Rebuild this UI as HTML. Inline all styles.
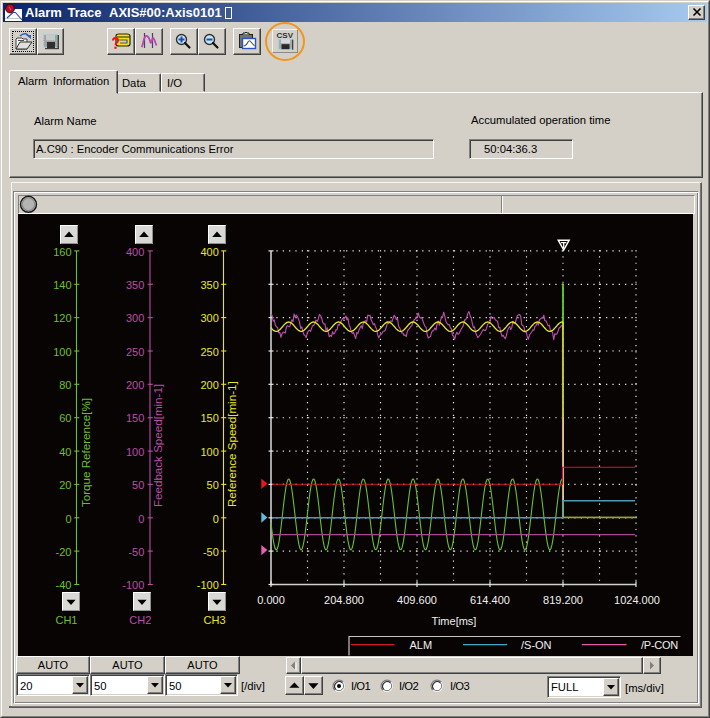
<!DOCTYPE html>
<html><head><meta charset="utf-8">
<style>
*{box-sizing:border-box;margin:0;padding:0}
html,body{width:710px;height:718px;overflow:hidden;background:#d4d0c8;font-family:"Liberation Sans",sans-serif;font-size:11px;color:#000}
.a{position:absolute}
#win{left:0;top:0;width:710px;height:718px;background:#d4d0c8;border:1px solid;border-color:#d4d0c8 #404040 #404040 #d4d0c8}
#win2{left:1px;top:1px;width:708px;height:716px;border:1px solid;border-color:#fff #808080 #808080 #fff}
#title{left:3px;top:3px;width:704px;height:19px;background:linear-gradient(90deg,#0a246a 0%,#a6caf0 100%)}
.tt{top:5px;color:#fff;font-weight:bold;font-size:13px;line-height:15px;white-space:nowrap}
.btn{background:#d4d0c8;border:1px solid;border-color:#fff #404040 #404040 #fff;box-shadow:inset -1px -1px 0 #808080,inset 1px 1px 0 #d4d0c8}
.sunk{border:1px solid;border-color:#808080 #fff #fff #808080}
.raised{border:1px solid;border-color:#fff #808080 #808080 #fff}
.etch{border:1px solid;border-color:#808080 #fff #fff #808080;box-shadow:inset 1px 1px 0 #fff, 1px 1px 0 #808080}
.t{white-space:nowrap;line-height:13px}
</style></head><body>
<div id="win" class="a"></div><div id="win2" class="a"></div>
<div id="title" class="a"></div>
<div class="a tt" style="left:25px">Alarm</div><div class="a tt" style="left:67.5px">Trace</div><div class="a tt" style="left:109px">AXIS#00:Axis0101</div>
<div class="a" style="left:225px;top:7px;width:7px;height:12px;border:1.5px solid #fff"></div>
<svg class="a" style="left:4px;top:3px" width="20" height="19" viewBox="0 0 20 19">
 <rect x="1" y="6" width="17" height="12" fill="#fff"/>
 <path d="M1 15.5 H18" stroke="#c8c8c8" stroke-width="1"/>
 <path d="M3 15 L9 9.5 L11.5 9.5 L18 17" stroke="#2a4aa8" stroke-width="1.1" fill="none"/>
 <circle cx="6" cy="5.5" r="4.4" fill="#b01020" stroke="#400008" stroke-width="1"/>
 <path d="M5 4 L7 7" stroke="#e838a8" stroke-width="1.3"/>
</svg>
<!-- close button -->
<div class="a btn" style="left:688px;top:5px;width:17px;height:15px"></div>
<svg class="a" style="left:688.5px;top:5px" width="16" height="14" viewBox="0 0 16 14"><path d="M4.5 3.5 L11.5 10.5 M11.5 3.5 L4.5 10.5" stroke="#000" stroke-width="1.6"/></svg>


<!-- toolbar buttons -->
<div class="a btn" style="left:9px;top:28px;width:28px;height:27px"></div>
<div class="a" style="left:12px;top:31px;width:22px;height:21px;border:1px dotted #000"></div>
<svg class="a" style="left:14px;top:32px" width="20" height="20" viewBox="0 0 20 20">
 <path d="M6 4 Q10 0 14 3" stroke="#2a5fc0" stroke-width="1.6" fill="none"/><path d="M12 3 L17 3 L17 7 Z" fill="#2a5fc0"/>
 <path d="M2 7 L2 17 L13 17 L13 7 L9 7 L8 6 L3 6 Z" fill="#f4f4f4" stroke="#404040" stroke-width="1"/>
 <path d="M2 17 L6 10 L18 10 L13 17 Z" fill="#e0e0e0" stroke="#303030" stroke-width="1"/>
 <path d="M4 8.5 H10" stroke="#505050" stroke-width="1"/>
</svg>
<div class="a btn" style="left:37px;top:28px;width:27px;height:27px"></div>
<svg class="a" style="left:42px;top:33px" width="18" height="17" viewBox="0 0 18 17">
 <rect x="1.5" y="1.5" width="14" height="13" fill="#a0a0a0" stroke="#9adcf0" stroke-width="1.4" stroke-dasharray="1.2 1"/>
 <rect x="4" y="1.5" width="9" height="6" fill="#c8c8c8"/>
 <rect x="5" y="9" width="8" height="6" fill="#303030"/>
 <rect x="15.5" y="2" width="1.5" height="13" fill="#404040"/>
 <rect x="3" y="15" width="14" height="1.2" fill="#404040"/>
</svg>
<div class="a btn" style="left:107px;top:28px;width:28px;height:27px"></div>
<svg class="a" style="left:111px;top:32px" width="22" height="20" viewBox="0 0 22 20">
 <path d="M5 4 Q5 2 8 2 L16 2 Q19 2 19 4 L19 12 Q19 14 16 14 L8 14 Q5 14 5 12 Z" fill="#f4e020" stroke="#282800" stroke-width="1.2"/>
 <path d="M6 5 H19" stroke="#282800" stroke-width="1"/>
 <path d="M8 8 L16 8 L16 11 L9 11" stroke="#3a50b0" stroke-width="1.2" fill="none"/>
 <path d="M2 8.5 Q2 6 4.5 6 Q7 6 7 8.5 Q7 10 5.5 11 Q4.5 11.8 4.5 13" stroke="#e8141e" stroke-width="2" fill="none"/>
 <rect x="3.4" y="14.6" width="2.2" height="2.2" fill="#e8141e"/>
</svg>
<div class="a btn" style="left:135px;top:28px;width:28px;height:27px"></div>
<svg class="a" style="left:139px;top:32px" width="20" height="20" viewBox="0 0 20 20">
 <path d="M5.5 1 V16 M13.5 1 V16" stroke="#40407c" stroke-width="1.2"/>
 <path d="M2.5 15 Q3.5 14 4.5 9 Q6 3 8 4 Q10 5 11 9 Q12 13 13 8 Q14 4.5 15.5 8 Q16.5 11 17.5 13.5" stroke="#b848b0" stroke-width="1.8" fill="none"/>
</svg>
<div class="a btn" style="left:170px;top:28px;width:28px;height:27px"></div>
<svg class="a" style="left:174px;top:32px" width="20" height="20" viewBox="0 0 20 20">
 <circle cx="7.5" cy="7.5" r="5" fill="#c0e8f8" stroke="#303030" stroke-width="1.4"/>
 <path d="M7.5 4.5 V10.5 M4.5 7.5 H10.5" stroke="#2848b0" stroke-width="2"/>
 <path d="M11 11 L15.5 15.5" stroke="#101010" stroke-width="2.2" stroke-linecap="round"/>
</svg>
<div class="a btn" style="left:198px;top:28px;width:28px;height:27px"></div>
<svg class="a" style="left:202px;top:32px" width="20" height="20" viewBox="0 0 20 20">
 <circle cx="7.5" cy="7.5" r="5" fill="#c0e8f8" stroke="#303030" stroke-width="1.4"/>
 <path d="M4.5 7.5 H10.5" stroke="#2848b0" stroke-width="2"/>
 <path d="M11 11 L15.5 15.5" stroke="#101010" stroke-width="2.2" stroke-linecap="round"/>
</svg>
<div class="a btn" style="left:233px;top:28px;width:28px;height:27px"></div>
<svg class="a" style="left:237px;top:31px" width="21" height="20" viewBox="0 0 21 20">
 <rect x="2.5" y="3.5" width="13" height="13" fill="#707070" stroke="#202020" stroke-width="1"/>
 <path d="M6 3.5 V2 H8 Q9 0 10 2 H12 V3.5" fill="#d0d0d0" stroke="#202020" stroke-width="1"/>
 <rect x="5.5" y="7.5" width="13" height="10" fill="#fff" stroke="#2a56b8" stroke-width="1.4"/>
 <path d="M6.5 15 Q9 15 11 11 Q12.5 8.5 14 11 L17.5 15" stroke="#505050" stroke-width="1.1" fill="none"/>
</svg>
<div class="a" style="left:272px;top:29px;width:26px;height:24px;background:#d4d0c8;border:1px solid;border-color:#f4f2ee #8c8a84 #8c8a84 #f4f2ee"></div>
<svg class="a" style="left:276px;top:31px" width="19" height="21" viewBox="0 0 19 21">
 <text x="0.5" y="6.8" font-family="Liberation Sans" font-size="7" font-weight="bold" fill="#303030" textLength="16.5" lengthAdjust="spacingAndGlyphs">CSV</text>
 <rect x="2.5" y="8.2" width="14" height="10" fill="#a8a8a8" stroke="#9adcf0" stroke-width="1.4" stroke-dasharray="1.2 1"/>
 <rect x="5" y="8.2" width="9" height="4" fill="#d8d8d8"/>
 <rect x="5.5" y="13.2" width="8" height="5" fill="#282828"/>
 <rect x="16" y="8.7" width="1.3" height="10" fill="#404040"/>
</svg>
<div class="a" style="left:265px;top:22px;width:40px;height:39px;border:2px solid #f0961e;border-radius:50%"></div>
<!--TOOLBAR-->

<!-- tab panel -->
<div class="a" style="left:9px;top:92px;width:694px;height:86px;border:1px solid;border-color:#fff #404040 #404040 #fff;box-shadow:inset -1px -1px 0 #808080"></div>
<!-- tabs -->
<div class="a" style="left:117px;top:73px;width:44px;height:19px;border:1px solid;border-color:#fff #404040 transparent #fff;border-radius:2px 2px 0 0;box-shadow:inset -1px 0 0 #808080"></div>
<div class="a" style="left:161px;top:73px;width:44px;height:19px;border:1px solid;border-color:#fff #404040 transparent #fff;border-radius:2px 2px 0 0;box-shadow:inset -1px 0 0 #808080"></div>
<div class="a" style="left:9px;top:70px;width:109px;height:24px;background:#d4d0c8;border:1px solid;border-color:#fff #404040 #d4d0c8 #fff;border-radius:2px 2px 0 0;box-shadow:inset -1px 0 0 #808080"></div>
<div class="a" style="left:10px;top:92px;width:106px;height:2px;background:#d4d0c8"></div>
<div class="a t" style="left:18px;top:75px;font-size:11.25px;word-spacing:2.5px">Alarm Information</div>
<div class="a t" style="left:122px;top:77px;font-size:11.25px">Data</div>
<div class="a t" style="left:167px;top:77px;font-size:11.25px">I/O</div>
<div class="a t" style="left:34px;top:115px;font-size:11.25px">Alarm Name</div>
<div class="a" style="left:33px;top:139px;width:401px;height:20px;border:1px solid;border-color:#808080 #fff #fff #808080;box-shadow:inset 1px 1px 0 #404040"></div>
<div class="a t" style="left:36px;top:143px;font-size:11.25px">A.C90 : Encoder Communications Error</div>
<div class="a t" style="left:471px;top:114px;font-size:11.25px">Accumulated operation time</div>
<div class="a" style="left:469px;top:139px;width:104px;height:20px;border:1px solid;border-color:#808080 #fff #fff #808080;box-shadow:inset 1px 1px 0 #404040"></div>
<div class="a t" style="left:484px;top:143px;font-size:11.25px">50:04:36.3</div>
<!--TABS-->

<!-- lower group raised -->
<div class="a" style="left:11px;top:182px;width:691px;height:526px;border:1px solid;border-color:#f6f6f2 #585858 #585858 #f6f6f2;box-shadow:inset -1px -1px 0 #787878"></div>
<!-- etched inner frame -->
<div class="a" style="left:13px;top:191px;width:686px;height:513px;border:1px solid;border-color:#808080 #fff #fff #808080;box-shadow:inset 1px 1px 0 #fff,inset -1px -1px 0 #808080"></div>
<!-- status strip -->
<div class="a" style="left:18px;top:195px;width:677px;height:19px;border:1px solid;border-color:#808080 #fff #fff #808080"></div>
<div class="a" style="left:501px;top:196px;width:2px;height:17px;border-left:1px solid #808080;border-right:1px solid #fff"></div>
<svg class="a" style="left:19px;top:195px" width="19" height="19" viewBox="0 0 19 19"><circle cx="9.5" cy="9.3" r="8" fill="#b4b4b4" stroke="#181818" stroke-width="1.4"/><circle cx="9.5" cy="9.3" r="6.3" fill="none" stroke="#8c8c8c" stroke-width="1.2"/></svg>
<!-- black chart -->
<div class="a" id="chart" style="left:18px;top:214px;width:675px;height:442px;background:#080404"></div>
<div class="a" style="left:9px;top:706px;width:3px;height:2px;background:#606060"></div><!--CHARTFRAME-->
<!--CHART_BEGIN--><svg class="a" style="left:0;top:0" width="710" height="718" viewBox="0 0 710 718" font-family="Liberation Sans, sans-serif" font-size="11">
<g stroke="#f0f0f0" stroke-width="1.15" stroke-dasharray="1.2 5.14" fill="none">
<path d="M276.4 250.9 H637.0"/>
<path d="M276.4 284.3 H637.0"/>
<path d="M276.4 317.6 H637.0"/>
<path d="M276.4 351.0 H637.0"/>
<path d="M276.4 384.3 H637.0"/>
<path d="M276.4 417.7 H637.0"/>
<path d="M276.4 451.1 H637.0"/>
<path d="M276.4 484.4 H637.0"/>
<path d="M276.4 517.8 H637.0"/>
<path d="M276.4 551.1 H637.0"/>
<path d="M307.5 256.3 V582.5"/>
<path d="M344.0 256.3 V582.5"/>
<path d="M380.5 256.3 V582.5"/>
<path d="M417.0 256.3 V582.5"/>
<path d="M453.5 256.3 V582.5"/>
<path d="M490.0 256.3 V582.5"/>
<path d="M526.5 256.3 V582.5"/>
<path d="M563.0 256.3 V582.5"/>
<path d="M599.5 256.3 V582.5"/>
<path d="M636.0 256.3 V582.5"/>
<rect x="306.9" y="250.2" width="1.2" height="1.2" fill="#f0f0f0" stroke="none"/>
<rect x="343.4" y="250.2" width="1.2" height="1.2" fill="#f0f0f0" stroke="none"/>
<rect x="379.9" y="250.2" width="1.2" height="1.2" fill="#f0f0f0" stroke="none"/>
<rect x="416.4" y="250.2" width="1.2" height="1.2" fill="#f0f0f0" stroke="none"/>
<rect x="452.9" y="250.2" width="1.2" height="1.2" fill="#f0f0f0" stroke="none"/>
<rect x="489.4" y="250.2" width="1.2" height="1.2" fill="#f0f0f0" stroke="none"/>
<rect x="525.9" y="250.2" width="1.2" height="1.2" fill="#f0f0f0" stroke="none"/>
<rect x="562.4" y="250.2" width="1.2" height="1.2" fill="#f0f0f0" stroke="none"/>
<rect x="598.9" y="250.2" width="1.2" height="1.2" fill="#f0f0f0" stroke="none"/>
<rect x="635.4" y="250.2" width="1.2" height="1.2" fill="#f0f0f0" stroke="none"/>
<rect x="306.9" y="283.6" width="1.2" height="1.2" fill="#f0f0f0" stroke="none"/>
<rect x="343.4" y="283.6" width="1.2" height="1.2" fill="#f0f0f0" stroke="none"/>
<rect x="379.9" y="283.6" width="1.2" height="1.2" fill="#f0f0f0" stroke="none"/>
<rect x="416.4" y="283.6" width="1.2" height="1.2" fill="#f0f0f0" stroke="none"/>
<rect x="452.9" y="283.6" width="1.2" height="1.2" fill="#f0f0f0" stroke="none"/>
<rect x="489.4" y="283.6" width="1.2" height="1.2" fill="#f0f0f0" stroke="none"/>
<rect x="525.9" y="283.6" width="1.2" height="1.2" fill="#f0f0f0" stroke="none"/>
<rect x="562.4" y="283.6" width="1.2" height="1.2" fill="#f0f0f0" stroke="none"/>
<rect x="598.9" y="283.6" width="1.2" height="1.2" fill="#f0f0f0" stroke="none"/>
<rect x="635.4" y="283.6" width="1.2" height="1.2" fill="#f0f0f0" stroke="none"/>
<rect x="306.9" y="317.0" width="1.2" height="1.2" fill="#f0f0f0" stroke="none"/>
<rect x="343.4" y="317.0" width="1.2" height="1.2" fill="#f0f0f0" stroke="none"/>
<rect x="379.9" y="317.0" width="1.2" height="1.2" fill="#f0f0f0" stroke="none"/>
<rect x="416.4" y="317.0" width="1.2" height="1.2" fill="#f0f0f0" stroke="none"/>
<rect x="452.9" y="317.0" width="1.2" height="1.2" fill="#f0f0f0" stroke="none"/>
<rect x="489.4" y="317.0" width="1.2" height="1.2" fill="#f0f0f0" stroke="none"/>
<rect x="525.9" y="317.0" width="1.2" height="1.2" fill="#f0f0f0" stroke="none"/>
<rect x="562.4" y="317.0" width="1.2" height="1.2" fill="#f0f0f0" stroke="none"/>
<rect x="598.9" y="317.0" width="1.2" height="1.2" fill="#f0f0f0" stroke="none"/>
<rect x="635.4" y="317.0" width="1.2" height="1.2" fill="#f0f0f0" stroke="none"/>
<rect x="306.9" y="350.3" width="1.2" height="1.2" fill="#f0f0f0" stroke="none"/>
<rect x="343.4" y="350.3" width="1.2" height="1.2" fill="#f0f0f0" stroke="none"/>
<rect x="379.9" y="350.3" width="1.2" height="1.2" fill="#f0f0f0" stroke="none"/>
<rect x="416.4" y="350.3" width="1.2" height="1.2" fill="#f0f0f0" stroke="none"/>
<rect x="452.9" y="350.3" width="1.2" height="1.2" fill="#f0f0f0" stroke="none"/>
<rect x="489.4" y="350.3" width="1.2" height="1.2" fill="#f0f0f0" stroke="none"/>
<rect x="525.9" y="350.3" width="1.2" height="1.2" fill="#f0f0f0" stroke="none"/>
<rect x="562.4" y="350.3" width="1.2" height="1.2" fill="#f0f0f0" stroke="none"/>
<rect x="598.9" y="350.3" width="1.2" height="1.2" fill="#f0f0f0" stroke="none"/>
<rect x="635.4" y="350.3" width="1.2" height="1.2" fill="#f0f0f0" stroke="none"/>
<rect x="306.9" y="383.7" width="1.2" height="1.2" fill="#f0f0f0" stroke="none"/>
<rect x="343.4" y="383.7" width="1.2" height="1.2" fill="#f0f0f0" stroke="none"/>
<rect x="379.9" y="383.7" width="1.2" height="1.2" fill="#f0f0f0" stroke="none"/>
<rect x="416.4" y="383.7" width="1.2" height="1.2" fill="#f0f0f0" stroke="none"/>
<rect x="452.9" y="383.7" width="1.2" height="1.2" fill="#f0f0f0" stroke="none"/>
<rect x="489.4" y="383.7" width="1.2" height="1.2" fill="#f0f0f0" stroke="none"/>
<rect x="525.9" y="383.7" width="1.2" height="1.2" fill="#f0f0f0" stroke="none"/>
<rect x="562.4" y="383.7" width="1.2" height="1.2" fill="#f0f0f0" stroke="none"/>
<rect x="598.9" y="383.7" width="1.2" height="1.2" fill="#f0f0f0" stroke="none"/>
<rect x="635.4" y="383.7" width="1.2" height="1.2" fill="#f0f0f0" stroke="none"/>
<rect x="306.9" y="417.1" width="1.2" height="1.2" fill="#f0f0f0" stroke="none"/>
<rect x="343.4" y="417.1" width="1.2" height="1.2" fill="#f0f0f0" stroke="none"/>
<rect x="379.9" y="417.1" width="1.2" height="1.2" fill="#f0f0f0" stroke="none"/>
<rect x="416.4" y="417.1" width="1.2" height="1.2" fill="#f0f0f0" stroke="none"/>
<rect x="452.9" y="417.1" width="1.2" height="1.2" fill="#f0f0f0" stroke="none"/>
<rect x="489.4" y="417.1" width="1.2" height="1.2" fill="#f0f0f0" stroke="none"/>
<rect x="525.9" y="417.1" width="1.2" height="1.2" fill="#f0f0f0" stroke="none"/>
<rect x="562.4" y="417.1" width="1.2" height="1.2" fill="#f0f0f0" stroke="none"/>
<rect x="598.9" y="417.1" width="1.2" height="1.2" fill="#f0f0f0" stroke="none"/>
<rect x="635.4" y="417.1" width="1.2" height="1.2" fill="#f0f0f0" stroke="none"/>
<rect x="306.9" y="450.4" width="1.2" height="1.2" fill="#f0f0f0" stroke="none"/>
<rect x="343.4" y="450.4" width="1.2" height="1.2" fill="#f0f0f0" stroke="none"/>
<rect x="379.9" y="450.4" width="1.2" height="1.2" fill="#f0f0f0" stroke="none"/>
<rect x="416.4" y="450.4" width="1.2" height="1.2" fill="#f0f0f0" stroke="none"/>
<rect x="452.9" y="450.4" width="1.2" height="1.2" fill="#f0f0f0" stroke="none"/>
<rect x="489.4" y="450.4" width="1.2" height="1.2" fill="#f0f0f0" stroke="none"/>
<rect x="525.9" y="450.4" width="1.2" height="1.2" fill="#f0f0f0" stroke="none"/>
<rect x="562.4" y="450.4" width="1.2" height="1.2" fill="#f0f0f0" stroke="none"/>
<rect x="598.9" y="450.4" width="1.2" height="1.2" fill="#f0f0f0" stroke="none"/>
<rect x="635.4" y="450.4" width="1.2" height="1.2" fill="#f0f0f0" stroke="none"/>
<rect x="306.9" y="483.8" width="1.2" height="1.2" fill="#f0f0f0" stroke="none"/>
<rect x="343.4" y="483.8" width="1.2" height="1.2" fill="#f0f0f0" stroke="none"/>
<rect x="379.9" y="483.8" width="1.2" height="1.2" fill="#f0f0f0" stroke="none"/>
<rect x="416.4" y="483.8" width="1.2" height="1.2" fill="#f0f0f0" stroke="none"/>
<rect x="452.9" y="483.8" width="1.2" height="1.2" fill="#f0f0f0" stroke="none"/>
<rect x="489.4" y="483.8" width="1.2" height="1.2" fill="#f0f0f0" stroke="none"/>
<rect x="525.9" y="483.8" width="1.2" height="1.2" fill="#f0f0f0" stroke="none"/>
<rect x="562.4" y="483.8" width="1.2" height="1.2" fill="#f0f0f0" stroke="none"/>
<rect x="598.9" y="483.8" width="1.2" height="1.2" fill="#f0f0f0" stroke="none"/>
<rect x="635.4" y="483.8" width="1.2" height="1.2" fill="#f0f0f0" stroke="none"/>
<rect x="306.9" y="517.1" width="1.2" height="1.2" fill="#f0f0f0" stroke="none"/>
<rect x="343.4" y="517.1" width="1.2" height="1.2" fill="#f0f0f0" stroke="none"/>
<rect x="379.9" y="517.1" width="1.2" height="1.2" fill="#f0f0f0" stroke="none"/>
<rect x="416.4" y="517.1" width="1.2" height="1.2" fill="#f0f0f0" stroke="none"/>
<rect x="452.9" y="517.1" width="1.2" height="1.2" fill="#f0f0f0" stroke="none"/>
<rect x="489.4" y="517.1" width="1.2" height="1.2" fill="#f0f0f0" stroke="none"/>
<rect x="525.9" y="517.1" width="1.2" height="1.2" fill="#f0f0f0" stroke="none"/>
<rect x="562.4" y="517.1" width="1.2" height="1.2" fill="#f0f0f0" stroke="none"/>
<rect x="598.9" y="517.1" width="1.2" height="1.2" fill="#f0f0f0" stroke="none"/>
<rect x="635.4" y="517.1" width="1.2" height="1.2" fill="#f0f0f0" stroke="none"/>
<rect x="306.9" y="550.5" width="1.2" height="1.2" fill="#f0f0f0" stroke="none"/>
<rect x="343.4" y="550.5" width="1.2" height="1.2" fill="#f0f0f0" stroke="none"/>
<rect x="379.9" y="550.5" width="1.2" height="1.2" fill="#f0f0f0" stroke="none"/>
<rect x="416.4" y="550.5" width="1.2" height="1.2" fill="#f0f0f0" stroke="none"/>
<rect x="452.9" y="550.5" width="1.2" height="1.2" fill="#f0f0f0" stroke="none"/>
<rect x="489.4" y="550.5" width="1.2" height="1.2" fill="#f0f0f0" stroke="none"/>
<rect x="525.9" y="550.5" width="1.2" height="1.2" fill="#f0f0f0" stroke="none"/>
<rect x="562.4" y="550.5" width="1.2" height="1.2" fill="#f0f0f0" stroke="none"/>
<rect x="598.9" y="550.5" width="1.2" height="1.2" fill="#f0f0f0" stroke="none"/>
<rect x="635.4" y="550.5" width="1.2" height="1.2" fill="#f0f0f0" stroke="none"/>
</g>
<path d="M271.0 250.9 V584.5 H636.0" stroke="#d0d0d0" stroke-width="1.6" fill="none"/>
<g stroke="#e8e8e8" stroke-width="1.2">
<path d="M268.5 250.9 H273.5"/>
<path d="M271.0 581.3 V587.1"/>
<path d="M268.5 284.3 H273.5"/>
<path d="M268.5 317.6 H273.5"/>
<path d="M344.0 581.3 V587.1"/>
<path d="M268.5 351.0 H273.5"/>
<path d="M268.5 384.3 H273.5"/>
<path d="M417.0 581.3 V587.1"/>
<path d="M268.5 417.7 H273.5"/>
<path d="M268.5 451.1 H273.5"/>
<path d="M490.0 581.3 V587.1"/>
<path d="M268.5 484.4 H273.5"/>
<path d="M268.5 517.8 H273.5"/>
<path d="M563.0 581.3 V587.1"/>
<path d="M268.5 551.1 H273.5"/>
<path d="M268.5 584.5 H273.5"/>
<path d="M636.0 581.3 V587.1"/>
</g>
<path d="M76.5 250.9 V584.5" stroke="#6cc030" stroke-width="1.1"/>
<path d="M74.2 250.9 H79.3" stroke="#6cc030" stroke-width="1.1"/>
<text x="71.5" y="255.6" text-anchor="end" fill="#6cc030">160</text>
<path d="M74.2 284.3 H79.3" stroke="#6cc030" stroke-width="1.1"/>
<text x="71.5" y="289.0" text-anchor="end" fill="#6cc030">140</text>
<path d="M74.2 317.6 H79.3" stroke="#6cc030" stroke-width="1.1"/>
<text x="71.5" y="322.3" text-anchor="end" fill="#6cc030">120</text>
<path d="M74.2 351.0 H79.3" stroke="#6cc030" stroke-width="1.1"/>
<text x="71.5" y="355.7" text-anchor="end" fill="#6cc030">100</text>
<path d="M74.2 384.3 H79.3" stroke="#6cc030" stroke-width="1.1"/>
<text x="71.5" y="389.0" text-anchor="end" fill="#6cc030">80</text>
<path d="M74.2 417.7 H79.3" stroke="#6cc030" stroke-width="1.1"/>
<text x="71.5" y="422.4" text-anchor="end" fill="#6cc030">60</text>
<path d="M74.2 451.1 H79.3" stroke="#6cc030" stroke-width="1.1"/>
<text x="71.5" y="455.8" text-anchor="end" fill="#6cc030">40</text>
<path d="M74.2 484.4 H79.3" stroke="#6cc030" stroke-width="1.1"/>
<text x="71.5" y="489.1" text-anchor="end" fill="#6cc030">20</text>
<path d="M74.2 517.8 H79.3" stroke="#6cc030" stroke-width="1.1"/>
<text x="71.5" y="522.5" text-anchor="end" fill="#6cc030">0</text>
<path d="M74.2 551.1 H79.3" stroke="#6cc030" stroke-width="1.1"/>
<text x="71.5" y="555.8" text-anchor="end" fill="#6cc030">-20</text>
<path d="M74.2 584.5 H79.3" stroke="#6cc030" stroke-width="1.1"/>
<text x="71.5" y="589.2" text-anchor="end" fill="#6cc030">-40</text>
<text transform="translate(89.5,507) rotate(-90)" fill="#6cc030" font-size="11.6">Torque Reference[%]</text>
<text x="66.5" y="624" text-anchor="middle" fill="#6cc030">CH1</text>
<path d="M150 250.9 V584.5" stroke="#b850a8" stroke-width="1.1"/>
<path d="M147.7 250.9 H152.8" stroke="#b850a8" stroke-width="1.1"/>
<text x="144.3" y="255.6" text-anchor="end" fill="#b850a8">400</text>
<path d="M147.7 284.3 H152.8" stroke="#b850a8" stroke-width="1.1"/>
<text x="144.3" y="289.0" text-anchor="end" fill="#b850a8">350</text>
<path d="M147.7 317.6 H152.8" stroke="#b850a8" stroke-width="1.1"/>
<text x="144.3" y="322.3" text-anchor="end" fill="#b850a8">300</text>
<path d="M147.7 351.0 H152.8" stroke="#b850a8" stroke-width="1.1"/>
<text x="144.3" y="355.7" text-anchor="end" fill="#b850a8">250</text>
<path d="M147.7 384.3 H152.8" stroke="#b850a8" stroke-width="1.1"/>
<text x="144.3" y="389.0" text-anchor="end" fill="#b850a8">200</text>
<path d="M147.7 417.7 H152.8" stroke="#b850a8" stroke-width="1.1"/>
<text x="144.3" y="422.4" text-anchor="end" fill="#b850a8">150</text>
<path d="M147.7 451.1 H152.8" stroke="#b850a8" stroke-width="1.1"/>
<text x="144.3" y="455.8" text-anchor="end" fill="#b850a8">100</text>
<path d="M147.7 484.4 H152.8" stroke="#b850a8" stroke-width="1.1"/>
<text x="144.3" y="489.1" text-anchor="end" fill="#b850a8">50</text>
<path d="M147.7 517.8 H152.8" stroke="#b850a8" stroke-width="1.1"/>
<text x="144.3" y="522.5" text-anchor="end" fill="#b850a8">0</text>
<path d="M147.7 551.1 H152.8" stroke="#b850a8" stroke-width="1.1"/>
<text x="144.3" y="555.8" text-anchor="end" fill="#b850a8">-50</text>
<path d="M147.7 584.5 H152.8" stroke="#b850a8" stroke-width="1.1"/>
<text x="144.3" y="589.2" text-anchor="end" fill="#b850a8">-100</text>
<text transform="translate(162.0,507) rotate(-90)" fill="#b850a8" font-size="11.6">Feedback Speed[min-1]</text>
<text x="140.3" y="624" text-anchor="middle" fill="#b850a8">CH2</text>
<path d="M223.5 250.9 V584.5" stroke="#e8e820" stroke-width="1.1"/>
<path d="M221.2 250.9 H226.3" stroke="#e8e820" stroke-width="1.1"/>
<text x="218.8" y="255.6" text-anchor="end" fill="#e8e820">400</text>
<path d="M221.2 284.3 H226.3" stroke="#e8e820" stroke-width="1.1"/>
<text x="218.8" y="289.0" text-anchor="end" fill="#e8e820">350</text>
<path d="M221.2 317.6 H226.3" stroke="#e8e820" stroke-width="1.1"/>
<text x="218.8" y="322.3" text-anchor="end" fill="#e8e820">300</text>
<path d="M221.2 351.0 H226.3" stroke="#e8e820" stroke-width="1.1"/>
<text x="218.8" y="355.7" text-anchor="end" fill="#e8e820">250</text>
<path d="M221.2 384.3 H226.3" stroke="#e8e820" stroke-width="1.1"/>
<text x="218.8" y="389.0" text-anchor="end" fill="#e8e820">200</text>
<path d="M221.2 417.7 H226.3" stroke="#e8e820" stroke-width="1.1"/>
<text x="218.8" y="422.4" text-anchor="end" fill="#e8e820">150</text>
<path d="M221.2 451.1 H226.3" stroke="#e8e820" stroke-width="1.1"/>
<text x="218.8" y="455.8" text-anchor="end" fill="#e8e820">100</text>
<path d="M221.2 484.4 H226.3" stroke="#e8e820" stroke-width="1.1"/>
<text x="218.8" y="489.1" text-anchor="end" fill="#e8e820">50</text>
<path d="M221.2 517.8 H226.3" stroke="#e8e820" stroke-width="1.1"/>
<text x="218.8" y="522.5" text-anchor="end" fill="#e8e820">0</text>
<path d="M221.2 551.1 H226.3" stroke="#e8e820" stroke-width="1.1"/>
<text x="218.8" y="555.8" text-anchor="end" fill="#e8e820">-50</text>
<path d="M221.2 584.5 H226.3" stroke="#e8e820" stroke-width="1.1"/>
<text x="218.8" y="589.2" text-anchor="end" fill="#e8e820">-100</text>
<text transform="translate(235.5,507) rotate(-90)" fill="#e8e820" font-size="11.6">Reference Speed[min-1]</text>
<text x="214.6" y="624" text-anchor="middle" fill="#e8e820">CH3</text>
<text x="271.0" y="604.3" text-anchor="middle" fill="#f0f0f0">0.000</text>
<text x="344.0" y="604.3" text-anchor="middle" fill="#f0f0f0">204.800</text>
<text x="417.0" y="604.3" text-anchor="middle" fill="#f0f0f0">409.600</text>
<text x="490.0" y="604.3" text-anchor="middle" fill="#f0f0f0">614.400</text>
<text x="563.0" y="604.3" text-anchor="middle" fill="#f0f0f0">819.200</text>
<text x="637.0" y="604.3" text-anchor="middle" fill="#f0f0f0">1024.000</text>
<text x="454" y="625" text-anchor="middle" fill="#f0f0f0">Time[ms]</text>
<path d="M271.0 314.0 L272.1 315.4 L273.2 321.1 L274.3 320.0 L275.4 325.4 L276.5 326.9 L277.6 327.4 L278.7 332.8 L279.8 332.3 L280.9 337.3 L282.0 333.6 L283.1 332.0 L284.2 332.3 L285.3 333.1 L286.4 326.8 L287.5 325.7 L288.6 326.5 L289.7 326.8 L290.8 322.6 L291.9 319.7 L293.0 321.6 L294.1 313.9 L295.2 317.3 L296.3 315.0 L297.4 316.6 L298.5 318.9 L299.6 322.7 L300.7 328.4 L301.8 326.9 L302.9 331.9 L304.0 334.8 L305.1 335.6 L306.2 337.6 L307.3 332.7 L308.4 330.9 L309.5 330.1 L310.6 331.3 L311.7 327.9 L312.8 325.4 L313.9 325.4 L315.0 322.8 L316.1 320.0 L317.2 321.4 L318.3 319.0 L319.4 314.3 L320.5 315.5 L321.6 317.7 L322.7 322.4 L323.8 324.0 L324.9 323.7 L326.0 330.7 L327.1 327.6 L328.2 332.1 L329.3 336.8 L330.4 335.4 L331.5 336.4 L332.6 331.7 L333.7 334.0 L334.8 332.8 L335.9 329.8 L337.0 330.0 L338.1 324.6 L339.2 325.2 L340.3 322.8 L341.4 320.9 L342.5 318.4 L343.6 319.0 L344.7 317.9 L345.8 316.0 L346.9 319.8 L348.0 318.4 L349.1 325.0 L350.2 327.2 L351.3 331.9 L352.4 333.3 L353.5 332.4 L354.6 335.6 L355.7 338.5 L356.8 332.6 L357.9 333.6 L359.0 329.9 L360.1 327.8 L361.2 325.7 L362.3 328.4 L363.4 322.6 L364.5 321.5 L365.6 320.7 L366.7 322.0 L367.8 315.1 L368.9 315.7 L370.0 315.2 L371.1 319.8 L372.2 321.9 L373.3 324.7 L374.4 323.5 L375.5 326.9 L376.6 329.1 L377.7 334.9 L378.8 337.9 L379.9 335.3 L381.0 334.5 L382.1 333.1 L383.2 331.3 L384.3 331.1 L385.4 330.0 L386.5 326.1 L387.6 322.7 L388.7 323.6 L389.8 321.5 L390.9 320.9 L392.0 321.6 L393.1 318.2 L394.2 315.3 L395.3 316.8 L396.4 319.7 L397.5 318.2 L398.6 326.2 L399.7 327.9 L400.8 331.0 L401.9 333.1 L403.0 333.0 L404.1 335.5 L405.2 335.0 L406.3 336.6 L407.4 331.1 L408.5 329.4 L409.6 328.5 L410.7 326.4 L411.8 325.8 L412.9 322.2 L414.0 320.0 L415.1 319.2 L416.2 317.1 L417.3 317.0 L418.4 313.1 L419.5 317.1 L420.6 318.0 L421.7 317.5 L422.8 320.7 L423.9 323.8 L425.0 326.4 L426.1 327.4 L427.2 334.6 L428.3 338.0 L429.4 337.1 L430.5 336.6 L431.6 332.2 L432.7 330.6 L433.8 330.3 L434.9 328.0 L436.0 329.9 L437.1 323.8 L438.2 321.1 L439.3 325.3 L440.4 320.8 L441.5 316.6 L442.6 317.3 L443.7 312.2 L444.8 316.1 L445.9 321.5 L447.0 323.3 L448.1 324.7 L449.2 324.5 L450.3 327.6 L451.4 328.9 L452.5 335.3 L453.6 336.2 L454.7 339.4 L455.8 334.7 L456.9 332.3 L458.0 334.3 L459.1 333.6 L460.2 331.0 L461.3 328.9 L462.4 327.2 L463.5 324.9 L464.6 319.8 L465.7 319.9 L466.8 317.1 L467.9 313.2 L469.0 311.6 L470.1 315.7 L471.2 318.1 L472.3 323.4 L473.4 327.6 L474.5 326.8 L475.6 332.5 L476.7 335.3 L477.8 337.6 L478.9 336.4 L480.0 335.0 L481.1 333.2 L482.2 331.3 L483.3 329.5 L484.4 330.4 L485.5 330.4 L486.6 328.2 L487.7 324.2 L488.8 323.5 L489.9 322.6 L491.0 316.3 L492.1 318.2 L493.2 318.0 L494.3 317.6 L495.4 319.9 L496.5 320.7 L497.6 321.3 L498.7 327.7 L499.8 327.3 L500.9 332.8 L502.0 336.4 L503.1 335.2 L504.2 337.1 L505.3 338.8 L506.4 335.6 L507.5 330.2 L508.6 328.2 L509.7 326.6 L510.8 329.6 L511.9 327.2 L513.0 321.2 L514.1 323.7 L515.2 323.0 L516.3 319.1 L517.4 315.4 L518.5 314.8 L519.6 314.6 L520.7 316.4 L521.8 325.0 L522.9 325.5 L524.0 327.2 L525.1 332.3 L526.2 331.6 L527.3 337.0 L528.4 339.2 L529.5 335.0 L530.6 333.5 L531.7 332.0 L532.8 329.9 L533.9 330.3 L535.0 326.4 L536.1 325.6 L537.2 322.0 L538.3 325.2 L539.4 319.9 L540.5 318.8 L541.6 317.8 L542.7 318.1 L543.8 315.1 L544.9 320.8 L546.0 320.7 L547.1 323.4 L548.2 325.9 L549.3 325.1 L550.4 330.3 L551.5 331.2 L552.6 332.6 L553.7 339.7 L554.8 333.9 L555.9 334.1 L557.0 333.9 L558.1 331.0 L559.2 327.8 L560.3 327.2 L561.4 325.7 L562.5 325.4 L562.5 517.4" stroke="#c050b0" stroke-width="1.1" fill="none" stroke-linejoin="round"/>
<path d="M271.0 522.9 L272.0 531.2 L273.0 538.5 L274.0 544.2 L275.0 548.1 L276.0 549.8 L277.0 549.3 L278.0 546.5 L279.0 541.8 L280.0 535.2 L281.0 527.4 L282.0 518.7 L283.0 509.8 L284.0 501.1 L285.0 493.3 L286.0 486.8 L287.0 482.1 L288.0 479.5 L289.0 479.0 L290.0 480.8 L291.0 484.7 L292.0 490.5 L293.0 497.9 L294.0 506.2 L295.0 515.1 L296.0 524.0 L297.0 532.2 L298.0 539.3 L299.0 544.9 L300.0 548.5 L301.0 549.9 L302.0 549.1 L303.0 546.0 L304.0 541.0 L305.0 534.3 L306.0 526.3 L307.0 517.6 L308.0 508.6 L309.0 500.0 L310.0 492.4 L311.0 486.1 L312.0 481.7 L313.0 479.3 L314.0 479.1 L315.0 481.2 L316.0 485.4 L317.0 491.4 L318.0 498.9 L319.0 507.4 L320.0 516.3 L321.0 525.1 L322.0 533.2 L323.0 540.2 L324.0 545.4 L325.0 548.8 L326.0 549.9 L327.0 548.8 L328.0 545.5 L329.0 540.2 L330.0 533.3 L331.0 525.2 L332.0 516.4 L333.0 507.5 L334.0 499.0 L335.0 491.5 L336.0 485.4 L337.0 481.2 L338.0 479.1 L339.0 479.3 L340.0 481.6 L341.0 486.1 L342.0 492.3 L343.0 500.0 L344.0 508.5 L345.0 517.5 L346.0 526.2 L347.0 534.2 L348.0 540.9 L349.0 546.0 L350.0 549.0 L351.0 549.9 L352.0 548.5 L353.0 544.9 L354.0 539.4 L355.0 532.3 L356.0 524.1 L357.0 515.2 L358.0 506.3 L359.0 497.9 L360.0 490.6 L361.0 484.8 L362.0 480.8 L363.0 479.0 L364.0 479.4 L365.0 482.1 L366.0 486.8 L367.0 493.2 L368.0 501.0 L369.0 509.7 L370.0 518.6 L371.0 527.3 L372.0 535.2 L373.0 541.7 L374.0 546.5 L375.0 549.3 L376.0 549.8 L377.0 548.1 L378.0 544.3 L379.0 538.6 L380.0 531.3 L381.0 522.9 L382.0 514.1 L383.0 505.2 L384.0 496.9 L385.0 489.8 L386.0 484.1 L387.0 480.5 L388.0 478.9 L389.0 479.7 L390.0 482.6 L391.0 487.5 L392.0 494.2 L393.0 502.1 L394.0 510.8 L395.0 519.8 L396.0 528.4 L397.0 536.1 L398.0 542.4 L399.0 547.0 L400.0 549.5 L401.0 549.7 L402.0 547.7 L403.0 543.6 L404.0 537.7 L405.0 530.3 L406.0 521.8 L407.0 512.9 L408.0 504.1 L409.0 495.9 L410.0 488.9 L411.0 483.6 L412.0 480.1 L413.0 478.9 L414.0 479.9 L415.0 483.1 L416.0 488.3 L417.0 495.2 L418.0 503.2 L419.0 512.0 L420.0 520.9 L421.0 529.4 L422.0 537.0 L423.0 543.1 L424.0 547.4 L425.0 549.6 L426.0 549.6 L427.0 547.3 L428.0 543.0 L429.0 536.8 L430.0 529.2 L431.0 520.7 L432.0 511.7 L433.0 503.0 L434.0 494.9 L435.0 488.1 L436.0 483.0 L437.0 479.9 L438.0 478.9 L439.0 480.2 L440.0 483.7 L441.0 489.1 L442.0 496.1 L443.0 504.3 L444.0 513.2 L445.0 522.1 L446.0 530.5 L447.0 537.9 L448.0 543.8 L449.0 547.8 L450.0 549.8 L451.0 549.4 L452.0 546.9 L453.0 542.3 L454.0 535.9 L455.0 528.1 L456.0 519.5 L457.0 510.6 L458.0 501.9 L459.0 494.0 L460.0 487.4 L461.0 482.5 L462.0 479.6 L463.0 478.9 L464.0 480.5 L465.0 484.3 L466.0 489.9 L467.0 497.2 L468.0 505.5 L469.0 514.3 L470.0 523.2 L471.0 531.5 L472.0 538.8 L473.0 544.4 L474.0 548.2 L475.0 549.8 L476.0 549.2 L477.0 546.4 L478.0 541.5 L479.0 534.9 L480.0 527.1 L481.0 518.4 L482.0 509.4 L483.0 500.8 L484.0 493.0 L485.0 486.6 L486.0 482.0 L487.0 479.4 L488.0 479.0 L489.0 480.9 L490.0 484.9 L491.0 490.8 L492.0 498.2 L493.0 506.6 L494.0 515.5 L495.0 524.3 L496.0 532.5 L497.0 539.6 L498.0 545.0 L499.0 548.6 L500.0 549.9 L501.0 549.0 L502.0 545.9 L503.0 540.8 L504.0 534.0 L505.0 526.0 L506.0 517.2 L507.0 508.3 L508.0 499.7 L509.0 492.1 L510.0 485.9 L511.0 481.5 L512.0 479.2 L513.0 479.1 L514.0 481.3 L515.0 485.6 L516.0 491.7 L517.0 499.2 L518.0 507.7 L519.0 516.7 L520.0 525.4 L521.0 533.5 L522.0 540.4 L523.0 545.6 L524.0 548.9 L525.0 549.9 L526.0 548.7 L527.0 545.3 L528.0 540.0 L529.0 533.0 L530.0 524.8 L531.0 516.0 L532.0 507.1 L533.0 498.7 L534.0 491.2 L535.0 485.2 L536.0 481.1 L537.0 479.1 L538.0 479.3 L539.0 481.8 L540.0 486.3 L541.0 492.6 L542.0 500.3 L543.0 508.9 L544.0 517.8 L545.0 526.5 L546.0 534.5 L547.0 541.2 L548.0 546.2 L549.0 549.1 L550.0 549.9 L551.0 548.4 L552.0 544.7 L553.0 539.1 L554.0 532.0 L555.0 523.7 L556.0 514.9 L557.0 506.0 L558.0 497.6 L559.0 490.3 L560.0 484.6 L561.0 480.7 L562.0 479.0 L563.0 479.5 L563.0 284 L563.0 517.4 H635.0" stroke="#6cc030" stroke-width="1.1" fill="none" stroke-linejoin="round"/>
<path d="M563.0 284 V330" stroke="#68d020" stroke-width="1.6" fill="none"/>
<path d="M563.5 517.6 H635.0" stroke="#a8a028" stroke-width="1.5" fill="none"/>
<path d="M271.0 327.8 L272.0 328.9 L273.0 329.9 L274.0 330.7 L275.0 331.2 L276.0 331.4 L277.0 331.3 L278.0 331.0 L279.0 330.3 L280.0 329.5 L281.0 328.4 L282.0 327.3 L283.0 326.1 L284.0 324.9 L285.0 323.9 L286.0 323.1 L287.0 322.4 L288.0 322.1 L289.0 322.0 L290.0 322.3 L291.0 322.8 L292.0 323.5 L293.0 324.5 L294.0 325.6 L295.0 326.8 L296.0 328.0 L297.0 329.1 L298.0 330.0 L299.0 330.7 L300.0 331.2 L301.0 331.4 L302.0 331.3 L303.0 330.9 L304.0 330.2 L305.0 329.3 L306.0 328.3 L307.0 327.1 L308.0 325.9 L309.0 324.8 L310.0 323.8 L311.0 323.0 L312.0 322.4 L313.0 322.0 L314.0 322.0 L315.0 322.3 L316.0 322.9 L317.0 323.7 L318.0 324.6 L319.0 325.8 L320.0 327.0 L321.0 328.1 L322.0 329.2 L323.0 330.1 L324.0 330.8 L325.0 331.2 L326.0 331.4 L327.0 331.3 L328.0 330.8 L329.0 330.1 L330.0 329.2 L331.0 328.1 L332.0 327.0 L333.0 325.8 L334.0 324.7 L335.0 323.7 L336.0 322.9 L337.0 322.3 L338.0 322.0 L339.0 322.0 L340.0 322.4 L341.0 322.9 L342.0 323.8 L343.0 324.8 L344.0 325.9 L345.0 327.1 L346.0 328.3 L347.0 329.3 L348.0 330.2 L349.0 330.9 L350.0 331.3 L351.0 331.4 L352.0 331.2 L353.0 330.7 L354.0 330.0 L355.0 329.1 L356.0 328.0 L357.0 326.8 L358.0 325.6 L359.0 324.5 L360.0 323.5 L361.0 322.8 L362.0 322.3 L363.0 322.0 L364.0 322.1 L365.0 322.4 L366.0 323.0 L367.0 323.9 L368.0 324.9 L369.0 326.1 L370.0 327.3 L371.0 328.4 L372.0 329.4 L373.0 330.3 L374.0 331.0 L375.0 331.3 L376.0 331.4 L377.0 331.2 L378.0 330.7 L379.0 329.9 L380.0 328.9 L381.0 327.8 L382.0 326.7 L383.0 325.5 L384.0 324.4 L385.0 323.4 L386.0 322.7 L387.0 322.2 L388.0 322.0 L389.0 322.1 L390.0 322.5 L391.0 323.1 L392.0 324.0 L393.0 325.1 L394.0 326.2 L395.0 327.4 L396.0 328.6 L397.0 329.6 L398.0 330.4 L399.0 331.0 L400.0 331.3 L401.0 331.4 L402.0 331.1 L403.0 330.6 L404.0 329.8 L405.0 328.8 L406.0 327.7 L407.0 326.5 L408.0 325.3 L409.0 324.3 L410.0 323.3 L411.0 322.6 L412.0 322.2 L413.0 322.0 L414.0 322.1 L415.0 322.6 L416.0 323.2 L417.0 324.2 L418.0 325.2 L419.0 326.4 L420.0 327.6 L421.0 328.7 L422.0 329.7 L423.0 330.5 L424.0 331.1 L425.0 331.4 L426.0 331.4 L427.0 331.1 L428.0 330.5 L429.0 329.7 L430.0 328.7 L431.0 327.5 L432.0 326.3 L433.0 325.2 L434.0 324.1 L435.0 323.2 L436.0 322.5 L437.0 322.1 L438.0 322.0 L439.0 322.2 L440.0 322.6 L441.0 323.4 L442.0 324.3 L443.0 325.4 L444.0 326.5 L445.0 327.7 L446.0 328.8 L447.0 329.8 L448.0 330.6 L449.0 331.1 L450.0 331.4 L451.0 331.3 L452.0 331.0 L453.0 330.4 L454.0 329.5 L455.0 328.5 L456.0 327.4 L457.0 326.2 L458.0 325.0 L459.0 324.0 L460.0 323.1 L461.0 322.5 L462.0 322.1 L463.0 322.0 L464.0 322.2 L465.0 322.7 L466.0 323.5 L467.0 324.4 L468.0 325.5 L469.0 326.7 L470.0 327.9 L471.0 329.0 L472.0 329.9 L473.0 330.7 L474.0 331.2 L475.0 331.4 L476.0 331.3 L477.0 330.9 L478.0 330.3 L479.0 329.4 L480.0 328.4 L481.0 327.2 L482.0 326.0 L483.0 324.9 L484.0 323.9 L485.0 323.0 L486.0 322.4 L487.0 322.1 L488.0 322.0 L489.0 322.3 L490.0 322.8 L491.0 323.6 L492.0 324.6 L493.0 325.7 L494.0 326.8 L495.0 328.0 L496.0 329.1 L497.0 330.0 L498.0 330.8 L499.0 331.2 L500.0 331.4 L501.0 331.3 L502.0 330.9 L503.0 330.2 L504.0 329.3 L505.0 328.2 L506.0 327.1 L507.0 325.9 L508.0 324.8 L509.0 323.7 L510.0 322.9 L511.0 322.3 L512.0 322.0 L513.0 322.0 L514.0 322.3 L515.0 322.9 L516.0 323.7 L517.0 324.7 L518.0 325.8 L519.0 327.0 L520.0 328.2 L521.0 329.2 L522.0 330.1 L523.0 330.8 L524.0 331.3 L525.0 331.4 L526.0 331.2 L527.0 330.8 L528.0 330.1 L529.0 329.2 L530.0 328.1 L531.0 326.9 L532.0 325.7 L533.0 324.6 L534.0 323.6 L535.0 322.8 L536.0 322.3 L537.0 322.0 L538.0 322.1 L539.0 322.4 L540.0 323.0 L541.0 323.8 L542.0 324.8 L543.0 326.0 L544.0 327.2 L545.0 328.3 L546.0 329.4 L547.0 330.2 L548.0 330.9 L549.0 331.3 L550.0 331.4 L551.0 331.2 L552.0 330.7 L553.0 330.0 L554.0 329.0 L555.0 327.9 L556.0 326.8 L557.0 325.6 L558.0 324.5 L559.0 323.5 L560.0 322.8 L561.0 322.2 L562.0 322.0 L563.0 322.1 L563.2 517.6" stroke="#e8e820" stroke-width="1.3" fill="none" stroke-linejoin="round"/>
<path d="M563.5 418 V500" stroke="#f0b0e0" stroke-width="0.9" fill="none"/>
<path d="M272.0 534.6 H635.0" stroke="#a84890" stroke-width="1.4" fill="none"/>
<path d="M272.0 517.8 H563.0 V500.8 H635.0" stroke="#4c9ab4" stroke-width="1.4" fill="none"/>
<path d="M272.0 484.2 H562.6 V467.3 H635.0" stroke="#cc1624" stroke-width="1.1" fill="none"/>
<path d="M261.3 478.6 L267.4 483.8 L261.3 489 Z" fill="#e81820"/>
<path d="M261.3 512.3 L267.4 517.5 L261.3 522.7 Z" fill="#60bce4"/>
<path d="M261.3 544.9 L267.4 550.1 L261.3 555.3 Z" fill="#e860b0"/>
<path d="M558.3 240.3 H569.1 L563.7 250 Z" fill="#080404" stroke="#fff" stroke-width="1.5" stroke-linejoin="miter"/>
<path d="M561.0 242.6 H566.4 M563.7 242.6 V248.5" stroke="#fff" stroke-width="1.3" fill="none"/>
<path d="M349 655.5 V636.5 H680.5" stroke="#c4c4c4" stroke-width="1.2" fill="none"/>
<path d="M351 644.6 H394.5" stroke="#d01828" stroke-width="1.2"/>
<text x="409.5" y="649" fill="#f0f0f0">ALM</text>
<path d="M463 644.6 H507" stroke="#40a8c8" stroke-width="1.2"/>
<text x="521" y="649" fill="#f0f0f0">/S-ON</text>
<path d="M582 644.6 H626.5" stroke="#e060a8" stroke-width="1.3"/>
<text x="641" y="649" letter-spacing="-0.25" fill="#f0f0f0">/P-CON</text>
</svg>
<div class="a" style="left:60px;top:225px;width:18px;height:19px;background:#d8d8d4;border:1px solid;border-color:#fff #909090 #909090 #fff"></div><svg class="a" style="left:60px;top:225px" width="18" height="19"><path d="M4.2 12.0 L9.0 6.5 L13.8 12.0 Z" fill="#000"/></svg>
<div class="a" style="left:135px;top:225px;width:18px;height:19px;background:#d8d8d4;border:1px solid;border-color:#fff #909090 #909090 #fff"></div><svg class="a" style="left:135px;top:225px" width="18" height="19"><path d="M4.2 12.0 L9.0 6.5 L13.8 12.0 Z" fill="#000"/></svg>
<div class="a" style="left:208px;top:225px;width:18px;height:19px;background:#d8d8d4;border:1px solid;border-color:#fff #909090 #909090 #fff"></div><svg class="a" style="left:208px;top:225px" width="18" height="19"><path d="M4.2 12.0 L9.0 6.5 L13.8 12.0 Z" fill="#000"/></svg>
<div class="a" style="left:62px;top:592px;width:18px;height:19px;background:#d8d8d4;border:1px solid;border-color:#fff #909090 #909090 #fff"></div><svg class="a" style="left:62px;top:592px" width="18" height="19"><path d="M4.4 7.7 L9.0 12.9 L13.6 7.7 Z" fill="#000"/></svg>
<div class="a" style="left:133px;top:592px;width:18px;height:19px;background:#d8d8d4;border:1px solid;border-color:#fff #909090 #909090 #fff"></div><svg class="a" style="left:133px;top:592px" width="18" height="19"><path d="M4.4 7.7 L9.0 12.9 L13.6 7.7 Z" fill="#000"/></svg>
<div class="a" style="left:208px;top:592px;width:18px;height:19px;background:#d8d8d4;border:1px solid;border-color:#fff #909090 #909090 #fff"></div><svg class="a" style="left:208px;top:592px" width="18" height="19"><path d="M4.4 7.7 L9.0 12.9 L13.6 7.7 Z" fill="#000"/></svg><!--CHART_END--><!--CHART-->
<!--B_BEGIN--><div class="a btn" style="left:16px;top:656px;width:74px;height:18px"></div><div class="a t" style="left:16px;top:659px;width:74px;text-align:center;font-size:11px">AUTO</div>
<div class="a btn" style="left:90px;top:656px;width:75px;height:18px"></div><div class="a t" style="left:90px;top:659px;width:75px;text-align:center;font-size:11px">AUTO</div>
<div class="a btn" style="left:165px;top:656px;width:75px;height:18px"></div><div class="a t" style="left:165px;top:659px;width:75px;text-align:center;font-size:11px">AUTO</div>
<div class="a" style="left:16px;top:674px;width:74px;height:22px;background:#fff;border:1px solid;border-color:#808080 #fff #fff #808080;box-shadow:inset 1px 1px 0 #404040,inset -1px -1px 0 #d4d0c8"></div><div class="a t" style="left:20px;top:680px;font-size:11.25px">20</div><div class="a btn" style="left:72px;top:676px;width:16px;height:18px"></div><svg class="a" style="left:72px;top:676px" width="16" height="18"><path d="M4 7.0 L8 11.5 L12 7.0 Z" fill="#000"/></svg>
<div class="a" style="left:90px;top:674px;width:75px;height:22px;background:#fff;border:1px solid;border-color:#808080 #fff #fff #808080;box-shadow:inset 1px 1px 0 #404040,inset -1px -1px 0 #d4d0c8"></div><div class="a t" style="left:94px;top:680px;font-size:11.25px">50</div><div class="a btn" style="left:147px;top:676px;width:16px;height:18px"></div><svg class="a" style="left:147px;top:676px" width="16" height="18"><path d="M4 7.0 L8 11.5 L12 7.0 Z" fill="#000"/></svg>
<div class="a" style="left:165px;top:674px;width:73px;height:22px;background:#fff;border:1px solid;border-color:#808080 #fff #fff #808080;box-shadow:inset 1px 1px 0 #404040,inset -1px -1px 0 #d4d0c8"></div><div class="a t" style="left:169px;top:680px;font-size:11.25px">50</div><div class="a btn" style="left:220px;top:676px;width:16px;height:18px"></div><svg class="a" style="left:220px;top:676px" width="16" height="18"><path d="M4 7.0 L8 11.5 L12 7.0 Z" fill="#000"/></svg>
<div class="a t" style="left:241px;top:680px;font-size:11.25px">[/div]</div>
<div class="a btn" style="left:286px;top:657px;width:15px;height:17px"></div>
<svg class="a" style="left:286px;top:657px" width="15" height="17"><path d="M9 4.5 L5 8.5 L9 12.5 Z" fill="#808080"/><path d="M10 5.5 L10 13.5" stroke="#fff" stroke-width="1"/></svg>
<div class="a btn" style="left:301px;top:657px;width:342px;height:17px"></div>
<div class="a btn" style="left:643px;top:657px;width:18px;height:17px"></div>
<svg class="a" style="left:643px;top:657px" width="18" height="17"><path d="M7 4.5 L11 8.5 L7 12.5 Z" fill="#808080"/></svg>
<div class="a btn" style="left:285px;top:676px;width:19px;height:19px"></div>
<svg class="a" style="left:285px;top:676px" width="19" height="19"><path d="M4.3 11.8 L9.4 6.5 L14.5 11.8 Z" fill="#000"/></svg>
<div class="a btn" style="left:304px;top:676px;width:19px;height:19px"></div>
<svg class="a" style="left:304px;top:676px" width="19" height="19"><path d="M4.3 7.3 L9.4 13 L14.5 7.3 Z" fill="#000"/></svg>
<svg class="a" style="left:332.0px;top:678.5px" width="14" height="14" viewBox="0 0 14 14"><circle cx="7" cy="7" r="5.9" fill="#fff"/><path d="M2.8 11.2 A5.9 5.9 0 0 1 11.2 2.8" stroke="#808080" stroke-width="1.2" fill="none"/><circle cx="7" cy="7" r="4.7" fill="#fff" stroke="#707070" stroke-width="1"/><path d="M3.7 10.3 A4.7 4.7 0 0 1 10.3 3.7" stroke="#303030" stroke-width="1.1" fill="none"/><circle cx="7" cy="7" r="2" fill="#000"/></svg>
<div class="a t" style="left:350px;top:679.5px;margin-left:1px;font-size:11.25px;letter-spacing:-0.5px">I/O1</div>
<svg class="a" style="left:379.5px;top:678.5px" width="14" height="14" viewBox="0 0 14 14"><circle cx="7" cy="7" r="5.9" fill="#fff"/><path d="M2.8 11.2 A5.9 5.9 0 0 1 11.2 2.8" stroke="#808080" stroke-width="1.2" fill="none"/><circle cx="7" cy="7" r="4.7" fill="#fff" stroke="#707070" stroke-width="1"/><path d="M3.7 10.3 A4.7 4.7 0 0 1 10.3 3.7" stroke="#303030" stroke-width="1.1" fill="none"/></svg>
<div class="a t" style="left:398px;top:679.5px;margin-left:1px;font-size:11.25px;letter-spacing:-0.5px">I/O2</div>
<svg class="a" style="left:430.0px;top:678.5px" width="14" height="14" viewBox="0 0 14 14"><circle cx="7" cy="7" r="5.9" fill="#fff"/><path d="M2.8 11.2 A5.9 5.9 0 0 1 11.2 2.8" stroke="#808080" stroke-width="1.2" fill="none"/><circle cx="7" cy="7" r="4.7" fill="#fff" stroke="#707070" stroke-width="1"/><path d="M3.7 10.3 A4.7 4.7 0 0 1 10.3 3.7" stroke="#303030" stroke-width="1.1" fill="none"/></svg>
<div class="a t" style="left:449px;top:679.5px;margin-left:1px;font-size:11.25px;letter-spacing:-0.5px">I/O3</div>
<div class="a" style="left:547px;top:676px;width:74px;height:22px;background:#fff;border:1px solid;border-color:#808080 #fff #fff #808080;box-shadow:inset 1px 1px 0 #404040,inset -1px -1px 0 #d4d0c8"></div><div class="a t" style="left:551px;top:681px;font-size:11.25px">FULL</div><div class="a btn" style="left:603px;top:678px;width:16px;height:18px"></div><svg class="a" style="left:603px;top:678px" width="16" height="18"><path d="M4 7.0 L8 11.5 L12 7.0 Z" fill="#000"/></svg>
<div class="a t" style="left:625px;top:682px;font-size:11.25px">[ms/div]</div><!--B_END--><!--BOTTOM-->
</body></html>
